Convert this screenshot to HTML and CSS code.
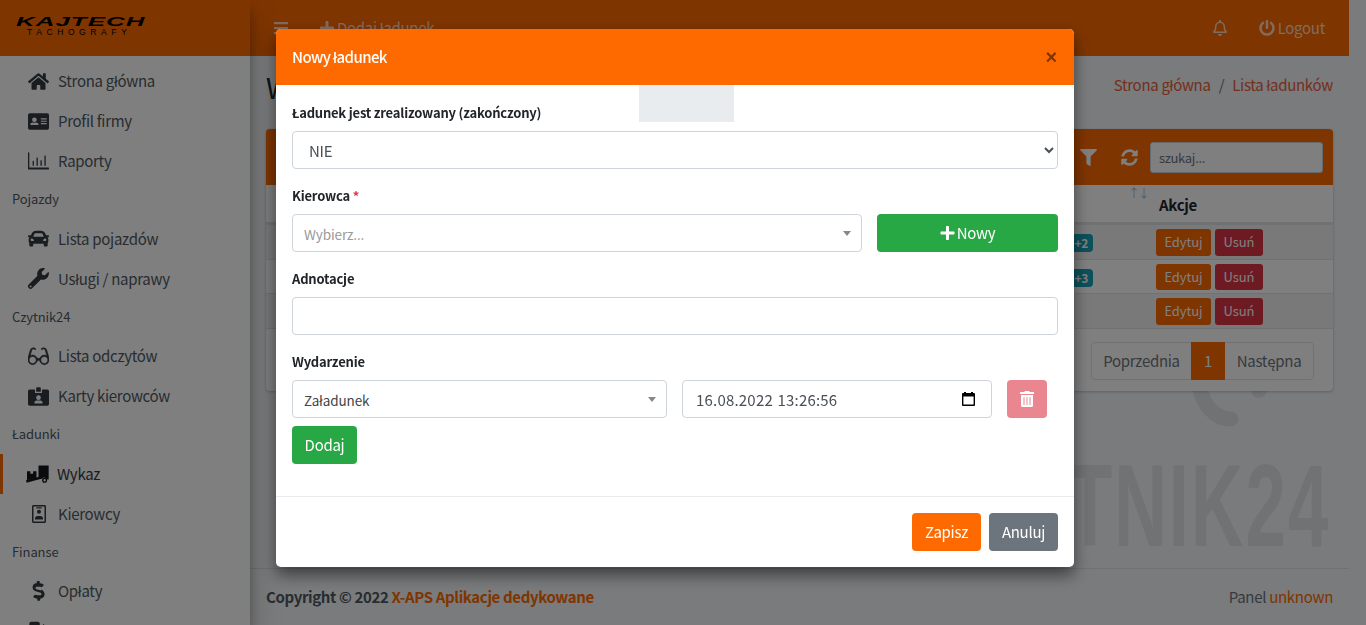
FILE: index.html
```html
<!DOCTYPE html>
<html lang="pl">
<head>
<meta charset="utf-8">
<title>Lista ładunków</title>
<link rel="stylesheet" href="styles.css">
</head>
<body>
<div class="wrapper">
  <aside class="sidebar">
    <div class="brand"><span class="brand-main">KAJTECH</span><span class="brand-sub">TACHOGRAFY</span></div>
    <nav class="nav">
      <a class="nav-item"><svg class="ni" viewBox="0 0 576 512"><path d="M280 148 96 300v164a16 16 0 0 0 16 16l112-.3a16 16 0 0 0 16-16V368a16 16 0 0 1 16-16h64a16 16 0 0 1 16 16v96a16 16 0 0 0 16 16l112 .3a16 16 0 0 0 16-16V300L296 148a12 12 0 0 0-16 0zm291 103-83-69V44a12 12 0 0 0-12-12h-56a12 12 0 0 0-12 12v72l-90-74a48 48 0 0 0-61 0L5 251a12 12 0 0 0-2 17l26 31a12 12 0 0 0 17 2L280 108a12 12 0 0 1 16 0l235 193a12 12 0 0 0 17-2l26-31a12 12 0 0 0-3-17z"/></svg><span>Strona główna</span></a>
      <a class="nav-item"><svg class="ni" viewBox="0 0 576 512"><path fill-rule="evenodd" d="M528 32H48A48 48 0 0 0 0 80v352a48 48 0 0 0 48 48h480a48 48 0 0 0 48-48V80a48 48 0 0 0-48-48zM176 144a64 64 0 1 1 0 128 64 64 0 0 1 0-128zm112 208H64v-20c0-26 32-48 70-48h6c11 4 23 8 36 8s25-4 36-8h6c38 0 70 22 70 48zm224-24H352v-32h160zm0-64H352v-32h160zm0-64H352v-32h160z"/></svg><span>Profil firmy</span></a>
      <a class="nav-item"><svg class="ni" viewBox="0 0 512 512"><path d="M500 400h-20 20a12 12 0 0 1 12 12v24a12 12 0 0 1-12 12H12a12 12 0 0 1-12-12V44a12 12 0 0 1 12-12h8a12 12 0 0 1 12 12v356zM120 240h16a8 8 0 0 1 8 8v104a8 8 0 0 1-8 8h-16a8 8 0 0 1-8-8V248a8 8 0 0 1 8-8zm96-80h16a8 8 0 0 1 8 8v184a8 8 0 0 1-8 8h-16a8 8 0 0 1-8-8V168a8 8 0 0 1 8-8zm96 64h16a8 8 0 0 1 8 8v120a8 8 0 0 1-8 8h-16a8 8 0 0 1-8-8V232a8 8 0 0 1 8-8zm96-112h16a8 8 0 0 1 8 8v232a8 8 0 0 1-8 8h-16a8 8 0 0 1-8-8V120a8 8 0 0 1 8-8z"/></svg><span>Raporty</span></a>
      <div class="nav-head">Pojazdy</div>
      <a class="nav-item"><svg class="ni" viewBox="0 0 512 512"><path fill-rule="evenodd" d="M499 177h-60l-17-42C404 92 363 64 316 64H196c-47 0-88 28-106 71l-17 42H13C5 177-2 185 0 193l6 24c1 5 6 9 12 9h20c-14 12-22 29-22 48v48c0 16 6 31 16 42v54c0 18 14 32 32 32h32c18 0 32-14 32-32v-32h256v32c0 18 14 32 32 32h32c18 0 32-14 32-32v-54c10-11 16-26 16-42v-48c0-19-9-36-22-48h20c6 0 11-4 12-9l6-24c2-8-5-16-13-16zM150 159c7-18 25-31 46-31h120c21 0 39 13 46 31l22 57H128zM96 319c-19 0-32-13-32-32s13-32 32-32 48 29 48 48-29 16-48 16zm320 0c-19 0-48 3-48-16s29-48 48-48 32 13 32 32-13 32-32 32z"/></svg><span>Lista pojazdów</span></a>
      <a class="nav-item"><svg class="ni" viewBox="0 0 512 512"><path d="M507 109a12 12 0 0 0-20-6l-74 74-68-11-11-68 74-74a12 12 0 0 0-6-20c-47-12-99 1-136 38-40 40-51 97-36 147L18 401a62 62 0 0 0 88 88l211-211c50 16 107 5 148-36 37-37 50-90 42-133zM64 472a24 24 0 1 1 0-48 24 24 0 0 1 0 48z"/></svg><span>Usługi / naprawy</span></a>
      <div class="nav-head">Czytnik24</div>
      <a class="nav-item"><svg class="ni glasses" viewBox="0 0 576 512"><path d="M574 280 512 72a88 88 0 0 0-84-56c-30 0-56 15-72 38l26 18c10-15 27-24 46-24 19 0 36 12 42 30l47 158c-21-12-45-20-69-20-59 0-106 39-122 90h-76c-16-51-63-90-122-90-24 0-48 8-69 20L106 78c6-18 23-30 42-30 19 0 36 9 46 24l26-18A88 88 0 0 0 148 16a88 88 0 0 0-84 56L2 280c-1 5-2 10-2 16v56c0 62 54 128 128 128 70 0 120-56 128-112h64c8 56 58 112 128 112 74 0 128-66 128-128v-56c0-6-1-11-2-16zM128 448c-53 0-96-43-96-96s43-96 96-96 96 43 96 96-43 96-96 96zm320 0c-53 0-96-43-96-96s43-96 96-96 96 43 96 96-43 96-96 96z"/></svg><span>Lista odczytów</span></a>
      <a class="nav-item"><svg class="ni" viewBox="0 0 576 512"><path fill-rule="evenodd" d="M528 64H384v96H192V64H48C22 64 0 86 0 112v352c0 26 22 48 48 48h480c26 0 48-22 48-48V112c0-26-22-48-48-48zM288 224a64 64 0 1 1 0 128 64 64 0 0 1 0-128zm112 224H176v-24c0-32 32-56 64-56h96c32 0 64 24 64 56zM352 32c0-18-14-32-32-32h-64c-18 0-32 14-32 32v96h128z"/></svg><span>Karty kierowców</span></a>
      <div class="nav-head">Ładunki</div>
      <a class="nav-item active"><svg class="ni wide" viewBox="0 0 68 54"><path d="M3 20h10v8h8v-8h10v20L3 47z"/><path d="M37 3h30v42H62a9 9 0 0 0-14-4l-11 3z"/><path d="M0 47l50-13v7L2 54z"/><circle cx="55" cy="47" r="5.5" fill="none" stroke="currentColor" stroke-width="4"/></svg><span>Wykaz</span></a>
      <a class="nav-item"><svg class="ni narrow" viewBox="0 0 448 576"><path fill-rule="evenodd" d="M400 0H48C22 0 0 22 0 48v480c0 26 22 48 48 48h352c26 0 48-22 48-48V48c0-26-22-48-48-48zm0 528H48V48h352zM224 150a64 64 0 1 1 0 128 64 64 0 0 1 0-128zM96 460v-40c0-40 40-70 80-70h96c40 0 80 30 80 70v40zM140 72h168v36H140z"/></svg><span>Kierowcy</span></a>
      <div class="nav-head">Finanse</div>
      <a class="nav-item"><svg class="ni" viewBox="0 0 288 512"><path d="M209 233 93 199c-13-4-22-16-22-30 0-17 14-31 31-31h71c13 0 26 4 37 11 6 4 15 3 20-2l37-36c8-7 7-19-2-26-26-20-58-31-91-31V12c0-7-5-12-12-12h-48c-7 0-12 5-12 12v42h-2C36 54-6 105 1 163c4 42 36 75 76 87l118 35c13 4 22 16 22 30 0 17-14 31-31 31h-71c-13 0-26-4-37-11-6-4-15-3-20 2l-37 36c-8 7-7 19 2 26 26 20 58 31 91 31v42c0 7 5 12 12 12h48c7 0 12-5 12-12v-42c47-1 91-29 103-74 17-62-20-126-80-143z"/></svg><span>Opłaty</span></a>
      <a class="nav-item"><svg class="ni" viewBox="0 0 512 512"><path d="M336 448H16v48h320zM32 64c0-26 22-48 48-48h160c26 0 48 22 48 48v352H32zM368 64l96 96v208a48 48 0 0 1-96 0V96z"/></svg></a>
    </nav>
  </aside>

  <div class="main">
    <header class="topbar">
      <div class="topbar-left">
        <svg class="tb-ico" viewBox="0 0 448 512"><path d="M16 132h416c9 0 16-7 16-16V76c0-9-7-16-16-16H16C7 60 0 67 0 76v40c0 9 7 16 16 16zm0 160h416c9 0 16-7 16-16v-40c0-9-7-16-16-16H16c-9 0-16 7-16 16v40c0 9 7 16 16 16zm0 160h416c9 0 16-7 16-16v-40c0-9-7-16-16-16H16c-9 0-16 7-16 16v40c0 9 7 16 16 16z"/></svg>
        <a class="tb-add"><svg class="tb-plus" viewBox="0 0 448 512"><path d="M416 208H272V64c0-18-14-32-32-32h-32c-18 0-32 14-32 32v144H32c-18 0-32 14-32 32v32c0 18 14 32 32 32h144v144c0 18 14 32 32 32h32c18 0 32-14 32-32V304h144c18 0 32-14 32-32v-32c0-18-14-32-32-32z"/></svg>Dodaj ładunek</a>
      </div>
      <div class="topbar-right">
        <svg class="tb-bell" viewBox="0 0 448 512"><path fill-rule="evenodd" d="M439 361c-19-21-55-52-55-153 0-77-54-139-127-154V32a32 32 0 1 0-66 0v22C118 69 64 131 64 208c0 101-36 132-55 153-6 6-9 14-9 22 0 16 13 32 32 32h384c19 0 32-16 32-32 0-8-3-16-9-22zM67 368c21-28 44-74 45-160v-1a112 112 0 0 1 224 1c0 86 24 132 45 160zM224 512a64 64 0 0 0 64-64H160a64 64 0 0 0 64 64z"/></svg>
        <a class="logout"><svg class="tb-power" viewBox="0 0 512 512"><path d="M400 54c63 45 104 118 104 202 0 137-111 248-247 248C121 504 8 393 8 256c0-84 41-157 104-202 11-9 28-5 35 8l16 28c6 10 3 24-7 31-41 31-68 79-68 135a168 168 0 0 0 336 0c0-56-26-104-68-135-10-7-13-21-7-31l16-28c7-13 24-17 35-8zM296 264V24c0-13-11-24-24-24h-32c-13 0-24 11-24 24v240c0 13 11 24 24 24h32c13 0 24-11 24-24z"/></svg>Logout</a>
      </div>
    </header>

    <div class="content">
      <div class="page-head">
        <h1 class="title">Wykaz ładunków</h1>
        <div class="crumbs"><a>Strona główna</a><span class="sep">/</span><a>Lista ładunków</a></div>
      </div>

      <section class="card">
        <div class="card-head">
          <svg class="ch-ico filter" viewBox="0 0 512 512"><path d="M488 0H24C3 0-8 26 7 41l185 185v206c0 8 4 15 10 20l80 56c16 11 38 0 38-20V226L505 41c15-15 4-41-17-41z"/></svg>
          <svg class="ch-ico sync" viewBox="0 0 512 512"><path d="M370 133c-31-29-71-45-114-45-77 0-143 53-161 126-2 5-7 10-12 10H26c-8 0-14-7-12-15C35 95 135 8 256 8c66 0 126 26 171 68l36-36c15-15 41-4 41 17v135c0 13-11 24-24 24H345c-21 0-32-26-17-41zM32 296h135c21 0 32 26 17 41l-42 42c31 29 71 45 114 45 77 0 143-53 161-126 2-5 7-10 12-10h57c8 0 14 7 12 15-21 114-121 201-242 201-66 0-126-26-171-68l-36 36c-15 15-41 4-41-17V320c0-13 11-24 24-24z"/></svg>
          <div class="search">szukaj...</div>
        </div>
        <div class="thead"><span class="sort">↑↓</span><span class="th-act">Akcje</span></div>
        <div class="row odd"><span class="badge">+2</span><span class="acts"><a class="bt bt-e">Edytuj</a><a class="bt bt-d">Usuń</a></span></div>
        <div class="row"><span class="badge">+3</span><span class="acts"><a class="bt bt-e">Edytuj</a><a class="bt bt-d">Usuń</a></span></div>
        <div class="row odd"><span class="acts"><a class="bt bt-e">Edytuj</a><a class="bt bt-d">Usuń</a></span></div>
        <div class="pager-wrap">
          <div class="pager"><a class="pg pg-prev">Poprzednia</a><a class="pg cur">1</a><a class="pg pg-next">Następna</a></div>
        </div>
      </section>

      <div class="watermark">
        <svg class="wm-shape" viewBox="0 0 90 50"><path class="wm-arc" d="M10 5C12 22 25 37 41 37"/><circle cx="69" cy="8" r="8"/></svg>
        <span class="wm-text">CZYTNIK24</span>
      </div>
    </div>

    <footer class="footer">
      <div class="copy">Copyright © 2022 <a>X-APS Aplikacje dedykowane</a></div>
      <div class="panel">Panel <a>unknown</a></div>
    </footer>
  </div>
</div>

<div class="backdrop"></div>

<div class="modal-layer">
  <div class="modal">
    <div class="modal-head">
      <h5 class="modal-title">Nowy ładunek</h5>
      <span class="close">×</span>
    </div>
    <div class="modal-body">
      <div class="grey-box"></div>
      <label class="lbl">Ładunek jest zrealizowany (zakończony)</label>
      <select class="ctl sel-native"><option>NIE</option></select>
      <label class="lbl">Kierowca <span class="req">*</span></label>
      <div class="rowline">
        <div class="ctl sel2 ph grow-k">Wybierz...<i class="caret"></i></div>
        <a class="btn btn-new"><svg class="plus" viewBox="0 0 448 512"><path d="M416 208H272V64c0-18-14-32-32-32h-32c-18 0-32 14-32 32v144H32c-18 0-32 14-32 32v32c0 18 14 32 32 32h144v144c0 18 14 32 32 32h32c18 0 32-14 32-32V304h144c18 0 32-14 32-32v-32c0-18-14-32-32-32z"/></svg>Nowy</a>
      </div>
      <label class="lbl">Adnotacje</label>
      <div class="ctl plain"></div>
      <label class="lbl">Wydarzenie</label>
      <div class="rowline ev">
        <div class="ctl sel2 ev-sel">Załadunek<i class="caret"></i></div>
        <div class="ctl ev-date"><span class="ev-val">16.08.2022 13:26:56</span><svg class="cal" viewBox="0 0 13 14"><path fill-rule="evenodd" d="M2 0h2v1h5V0h2v1h1a1 1 0 0 1 1 1v11a1 1 0 0 1-1 1H1a1 1 0 0 1-1-1V2a1 1 0 0 1 1-1h1zM1.400 4.500v8h10.200v-8z"/></svg></div>
        <a class="btn btn-trash"><svg class="trash" viewBox="0 0 448 512"><path fill-rule="evenodd" d="M32 464a48 48 0 0 0 48 48h288a48 48 0 0 0 48-48V128H32zm272-256a16 16 0 0 1 32 0v224a16 16 0 0 1-32 0zm-96 0a16 16 0 0 1 32 0v224a16 16 0 0 1-32 0zm-96 0a16 16 0 0 1 32 0v224a16 16 0 0 1-32 0zM432 32H312l-9-19a24 24 0 0 0-21-13H166a24 24 0 0 0-21 13l-9 19H16A16 16 0 0 0 0 48v32a16 16 0 0 0 16 16h416a16 16 0 0 0 16-16V48a16 16 0 0 0-16-16z"/></svg></a>
      </div>
      <a class="btn btn-add">Dodaj</a>
    </div>
    <div class="modal-foot">
      <a class="btn btn-save">Zapisz</a>
      <a class="btn btn-cancel">Anuluj</a>
    </div>
  </div>
</div>
</body>
</html>
```
FILE: styles.css
```css
* { box-sizing: border-box; }
html, body { margin: 0; height: 100%; overflow: hidden; }
body {
  font-family: "Noto Sans CJK SC", "Noto Sans", sans-serif;
  font-size: 15px;
  letter-spacing: -.3px;
  line-height: 24px;
  color: #212529;
  background: #f4f6f9;
}
a { color: inherit; text-decoration: none; }
svg { fill: currentColor; display: block; }

.wrapper { display: flex; width: 1349px; height: 625px; overflow: hidden; }

/* sidebar */
.sidebar { width: 250px; flex: none; background: #fff; height: 625px; overflow: hidden; box-shadow: 0 14px 28px rgba(0,0,0,.25), 0 10px 10px rgba(0,0,0,.22); position: relative; z-index: 2; }
.brand { height: 56px; background: #ff6a00; padding: 16px 0 0 16px; display: flex; flex-direction: column; color: #000; letter-spacing: 0; }
.brand-main { font: italic 900 12.500px/12px "Liberation Sans", sans-serif; transform: scaleX(2.07); transform-origin: left; letter-spacing: .5px; }
.brand-sub { font: 400 8.500px/8px "Liberation Sans", sans-serif; letter-spacing: 4.600px; margin-left: 11px; }
.nav { padding-top: 5px; color: #4f5962; display: flex; flex-direction: column; }
.nav-item { display: flex; align-items: center; height: 40px; flex: none; padding-left: 28px; }
.nav-item span { margin-left: 9px; }
.ni { width: 21px; height: 21px; color: #343a40; flex: none; }
.ni.wide { width: 23px; height: 19px; margin-left: -2px; color: #15171a; }
.ni.narrow { width: 14px; height: 18px; margin: 0 3.500px; }
.ni.glasses { stroke: currentColor; stroke-width: 14; }
.nav-item.active { border-left: 3px solid #ff6a00; padding-left: 25px; color: #343a40; }
.nav-item.active span { margin-left: 8px; }
.nav-head { height: 37.600px; flex: none; padding: 6px 0 0 12px; font-size: 13px; letter-spacing: -.1px; color: #4f5962; line-height: 24px; }

/* main */
.main { flex: 1; min-width: 0; display: flex; flex-direction: column; height: 625px; }
.topbar { height: 56px; background: #ff6a00; flex: none; display: flex; justify-content: space-between; align-items: center; padding: 0 24px; color: rgba(255,255,255,.75); }
.topbar-left, .topbar-right { display: flex; align-items: center; }
.tb-ico { width: 14px; height: 16px; }
.tb-add { display: flex; align-items: center; margin-left: 32px; }
.tb-plus { width: 14px; height: 16px; margin-right: 3px; }
.tb-bell { width: 14px; height: 16px; margin-right: 32px; }
.logout { display: flex; align-items: center; }
.tb-power { width: 16px; height: 16px; margin-right: 3px; }

.content { flex: 1; padding: 0 16px; position: relative; min-height: 0; }
.page-head { display: flex; justify-content: space-between; height: 73px; padding-top: 14px; }
.title { margin: 0; font-size: 28px; line-height: 34px; font-weight: 400; }
.crumbs { color: #e8603c; line-height: 30px; }
.sep { color: #6c757d; padding: 0 8px; }

.card { background: #fff; border-radius: 4px; box-shadow: 0 0 1px rgba(0,0,0,.13), 0 1px 3px rgba(0,0,0,.2); position: relative; z-index: 1; height: 262px; }
.card-head { height: 56px; background: #ff6a00; border-radius: 4px 4px 0 0; display: flex; align-items: center; justify-content: flex-end; padding-right: 10px; color: #fff; }
.ch-ico { width: 17px; height: 17px; }
.filter { margin-right: 24px; }
.sync { margin-right: 12px; }
.search { width: 173px; height: 31px; background: #fff; border: 1px solid #ced4da; border-radius: 3px; font-size: 13px; line-height: 29px; padding-left: 8px; color: #6c757d; }
.thead { height: 40px; border-bottom: 3px solid #dee2e6; position: relative; font-weight: 700; }
.th-act { position: absolute; left: 893px; top: 8px; }
.sort { position: absolute; left: 862px; top: 0; font-size: 12px; line-height: 16px; font-weight: 400; color: #adb5bd; letter-spacing: -2px; }
.row { height: 34.500px; position: relative; border-bottom: 1px solid #dee2e6; }
.row.odd { background: rgba(0,0,0,.05); }
.acts { position: absolute; left: 890px; top: 4px; display: flex; gap: 4px; }
.bt { height: 26.500px; font-size: 13px; line-height: 26px; border-radius: 3px; color: #fff; letter-spacing: -.1px; text-align: center; }
.bt-e { width: 55px; background: #ff6a00; }
.bt-d { width: 48px; background: #dc3545; }
.badge { position: absolute; left: 800px; top: 9px; width: 27px; height: 18px; background: #17a2b8; color: #fff; border-radius: 4px; font-size: 12px; font-weight: 700; line-height: 18px; text-align: right; padding-right: 5px; }
.pager-wrap { display: flex; justify-content: flex-end; padding: 13px 19px 0 0; }
.pager { display: flex; height: 38px; border: 1px solid #dee2e6; border-radius: 4px; color: #6c757d; }
.pg { line-height: 36px; text-align: center; }
.pg-prev { width: 99px; }
.pg-next { width: 88px; }
.cur { background: #ff6a00; color: #fff; width: 34px; margin: -1px 0; line-height: 38px; }

.watermark { position: absolute; right: 20px; top: 326px; width: 560px; height: 186px; }
.wm-shape { position: absolute; left: 421px; top: 0; width: 90px; height: 50px; fill: #e2e4e7; }
.wm-arc { fill: none; stroke: #e2e4e7; stroke-width: 15; stroke-linecap: round; }
.wm-text { position: absolute; right: 0; top: 65px; font: 700 117px/117px "Liberation Sans", sans-serif; letter-spacing: 3.500px; margin-right: -2px; color: #e2e4e7; transform: scaleX(.62); transform-origin: right; white-space: nowrap; }

.footer { height: 57px; flex: none; border-top: 1px solid #dee2e6; display: flex; justify-content: space-between; align-items: center; padding: 0 16px; background: #f4f6f9; position: relative; }
.copy { font-weight: 700; color: #4f5962; letter-spacing: -.37px; }
.copy a, .panel a { color: #ff6a00; }
.panel { color: #6c757d; }

/* overlay */
.backdrop { position: fixed; inset: 0; background: #000; opacity: .5; z-index: 10; }
.modal-layer { position: fixed; inset: 0; z-index: 20; }
.modal { position: absolute; left: 276px; top: 29px; width: 798px; height: 538px; background: #fff; border-radius: 4.800px; box-shadow: 0 8px 16px rgba(0,0,0,.5); display: flex; flex-direction: column; overflow: hidden; }
.modal-head { height: 56px; flex: none; background: #ff6a00; display: flex; justify-content: space-between; align-items: center; padding: 0 17px 0 16px; color: #fff; }
.modal-title { margin: 0; font-size: 15px; font-weight: 500; line-height: 24px; letter-spacing: -.6px; }
.close { font: 700 20px/24px "Liberation Sans", sans-serif; color: #000; opacity: .5; }
.modal-body { flex: 1; padding: 17px 16px 0; position: relative; }
.grey-box { position: absolute; left: 363px; top: 0; width: 95px; height: 37px; background: #e9ecef; }
.lbl { display: block; font-size: 13px; letter-spacing: -.2px; line-height: 21px; font-weight: 700; margin-bottom: 8px; height: 21px; }
.req { color: #dc3545; }
.ctl { display: block; width: 100%; height: 38px; border: 1px solid #ced4da; border-radius: 4px; background: #fff; color: #495057; font: inherit; letter-spacing: inherit; margin-bottom: 16px; }
.sel-native { padding: 0 12px; appearance: auto; }
.rowline { display: flex; }
.sel2 { position: relative; padding-left: 11px; font-size: 13.500px; letter-spacing: -.1px; line-height: 38px; color: #444; }
.ph { color: #999; }
.caret { position: absolute; right: 10px; top: 16px; border: 4px solid transparent; border-top: 5px solid #888; border-bottom: 0; }
.grow-k { width: 570px; flex: none; }
.btn { display: inline-flex; align-items: center; justify-content: center; height: 38px; border-radius: 4px; color: #fff; flex: none; }
.btn-new { width: 181px; margin-left: 15px; background: #28a745; }
.plus { width: 15px; height: 16px; margin-right: 2px; }
.ev { height: 46px; }
.ev-sel { width: 375px; flex: none; }
.ev-date { width: 310px; flex: none; margin-left: 15px; padding: 0 16px 0 13px; display: flex; align-items: center; justify-content: space-between; letter-spacing: .2px; }
.ev-val { margin-top: 1px; word-spacing: 1px; }
.cal { width: 13px; height: 14px; color: #000; }
.btn-trash { width: 40px; margin-left: 15px; background: #ea868f; }
.trash { width: 14px; height: 16px; }
.btn-add { display: flex; width: 65px; background: #28a745; }
.modal-foot { height: 71px; flex: none; border-top: 1px solid #e9ecef; display: flex; justify-content: flex-end; align-items: center; padding: 0 16px; gap: 8px; }
.btn-save { width: 69px; background: #ff6a00; }
.btn-cancel { width: 69px; background: #6c757d; }
```
